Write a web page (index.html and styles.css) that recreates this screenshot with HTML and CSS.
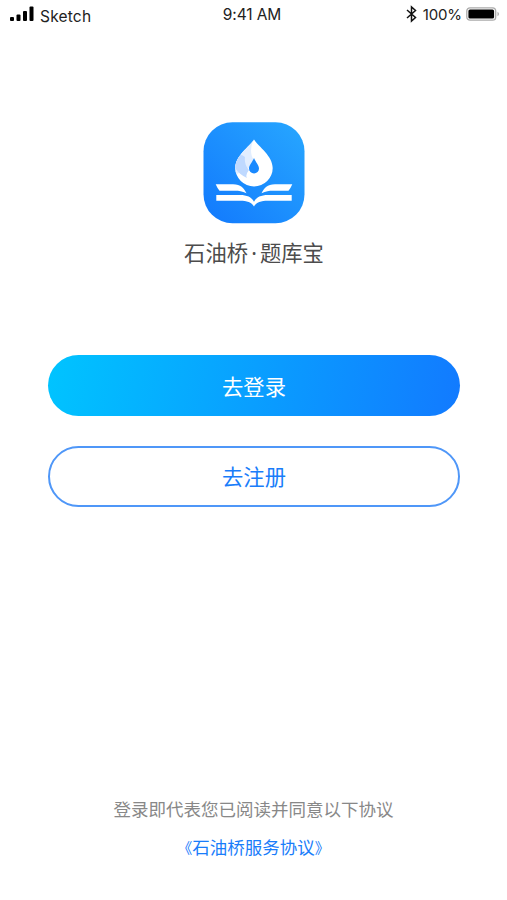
FILE: index.html
```html
<!DOCTYPE html>
<html lang="zh-CN">
<head>
  <meta charset="UTF-8" />
  <meta name="viewport" content="width=device-width, initial-scale=1.0" />
  <title>石油桥·题库宝</title>
  <link rel="stylesheet" href="styles.css">
</head>
<body>
  <div class="status-bar">
    <div class="carrier">
      <svg class="signal" width="24" height="16" viewBox="0 0 24 16">
        <rect x="0" y="11" width="4" height="4" rx="1" />
        <rect x="6.5" y="8.5" width="4" height="6.5" rx="1" />
        <rect x="13" y="5" width="4" height="10" rx="1" />
        <rect x="19.5" y="0.5" width="4" height="14.5" rx="1" />
      </svg>
      <span class="carrier-name">Sketch</span>
    </div>
    <div class="time">9:41 AM</div>
    <div class="battery">
      <svg width="11" height="18" viewBox="0 0 11 18" fill="none" stroke="#111" stroke-width="1.5">
        <path d="M1 5 L9.5 12.5 L5.5 16 V2 L9.5 5.5 L1 13" />
      </svg>
      <span class="percent">100%</span>
      <svg width="34" height="14" viewBox="0 0 34 14">
        <rect x="0.8" y="0.8" width="28.9" height="12.4" rx="3.2" fill="#fff" stroke="#aaa" stroke-width="1.3" />
        <rect x="2.4" y="2.4" width="25.7" height="9.2" rx="1.6" fill="#000" />
        <path d="M31.5 4.7 Q33 5.5 33 7 Q33 8.5 31.5 9.3 Z" fill="#aaa" />
      </svg>
    </div>
  </div>

  <div class="main">
    <svg class="logo" width="102" height="102" viewBox="0 0 102 102">
      <defs>
        <linearGradient id="logo-bg" x1="1" y1="0" x2="0" y2="1">
          <stop offset="0" stop-color="#27a7ff" />
          <stop offset="1" stop-color="#1279fd" />
        </linearGradient>
        <clipPath id="drop">
          <path d="M51 17.5 C46 25 32.3 34 32.3 46 A18.7 18.4 0 0 0 69.7 46 C69.7 34 56 25 51 17.5 Z" />
        </clipPath>
      </defs>
      <rect x="0.5" y="0.3" width="101" height="101" rx="29" fill="url(#logo-bg)" />
      <g clip-path="url(#drop)">
        <rect x="30" y="16" width="42" height="50" fill="#fff" />
        <path d="M51 16 Q45 30 51 38 L46 46 L34 52 L28 46 V16 Z" fill="#e2eeff" />
        <path d="M28 34 Q38 31 42 35 Q41 43 46 48 Q42 53 44 56 Q35 52 31 44 Z" fill="#bfd9ff" />
      </g>
      <path d="M51 36 C49.5 40 46 43 46 46.5 A5 5 0 0 0 56 46.5 C56 43 52.5 40 51 36 Z" fill="#1989ff" />
      <g fill="#fff">
        <path d="M12.7 62.3 H30 C38 62.3 40.5 66 43.5 71.2 C39 69 36 68.7 32 68.7 H16.5 Q14.2 66 12.7 62.3 Z" />
        <path d="M89.3 62.3 H72 C64 62.3 61.5 66 58.5 71.2 C63 69 66 68.7 70 68.7 H85.5 Q87.8 66 89.3 62.3 Z" />
        <path d="M13.3 73 H37 C44 73 48.5 75 51 79.7 C53.5 75 58 73 65 73 H88.7 V78.8 H65 C58 78.8 53.5 80.5 51 84.4 C48.5 80.5 44 78.8 37 78.8 H13.3 Z" />
      </g>
    </svg>
    <h1 class="app-name">石油桥<span class="dot">·</span>题库宝</h1>

    <div class="buttons">
      <button class="btn btn-login">去登录</button>
      <button class="btn btn-register">去注册</button>
    </div>
  </div>

  <div class="agreement">
    <p>登录即代表您已阅读并同意以下协议</p>
    <a href="#"><span class="mark">《</span>石油桥服务协议<span class="mark">》</span></a>
  </div>
</body>
</html>
```
FILE: styles.css
```css
* {
  box-sizing: border-box;
}

body {
  margin: 0;
  height: 100vh;
  display: flex;
  flex-direction: column;
  background-color: #fff;
  font-family: "Noto Sans CJK SC", sans-serif;
  overflow: hidden;
}

.status-bar {
  display: grid;
  grid-template-columns: 1fr auto 1fr;
  height: 30px;
  padding: 0 7px 0 10px;
  font-family: Inter, sans-serif;
  font-size: 15px;
  line-height: 30px;
  color: #222;
}

.carrier {
  display: flex;
  align-items: flex-start;
  gap: 6px;
}

.signal {
  margin-top: 6px;
}

.carrier-name {
  font-size: 15.5px;
  letter-spacing: 0.2px;
  line-height: 33px;
}

.time {
  margin-right: 6px;
  font-size: 15.5px;
  letter-spacing: -0.1px;
}

.battery {
  display: flex;
  align-items: center;
  justify-content: flex-end;
  height: 28px;
}

.percent {
  margin: 2px 4px 0 6px;
  letter-spacing: -0.1px;
}

.main {
  display: flex;
  flex-direction: column;
  align-items: center;
  padding: 92px 47px 0 48px;
}

.logo {
  display: block;
}

.app-name {
  margin: 12px 0 0;
  font-size: 21.3px;
  font-weight: 400;
  line-height: 32px;
  color: #4c4c4c;
}

.dot {
  display: inline-block;
  width: 12px;
  text-align: center;
  font-family: "Noto Sans", sans-serif;
}

.buttons {
  display: flex;
  flex-direction: column;
  gap: 30px;
  width: 100%;
  margin-top: 86px;
}

.btn {
  height: 61px;
  padding: 0 0 1px;
  border: none;
  border-radius: 31px;
  font-family: inherit;
  font-size: 21.3px;
  cursor: pointer;
}

.btn-login {
  background: linear-gradient(100deg, #00c4ff, #127aff);
  color: #fff;
}

.btn-register {
  padding-bottom: 2px;
  background: #fff;
  border: 2px solid #4f97f8;
  color: #197dfa;
}

.agreement {
  margin-top: auto;
  padding-bottom: 36px;
  text-align: center;
  font-size: 17.5px;
  line-height: 32px;
  color: #888;
}

.agreement p {
  margin: 0 0 6px;
}

.agreement a {
  color: #197dfa;
  text-decoration: none;
}

.mark {
  font-size: 15px;
}
```
